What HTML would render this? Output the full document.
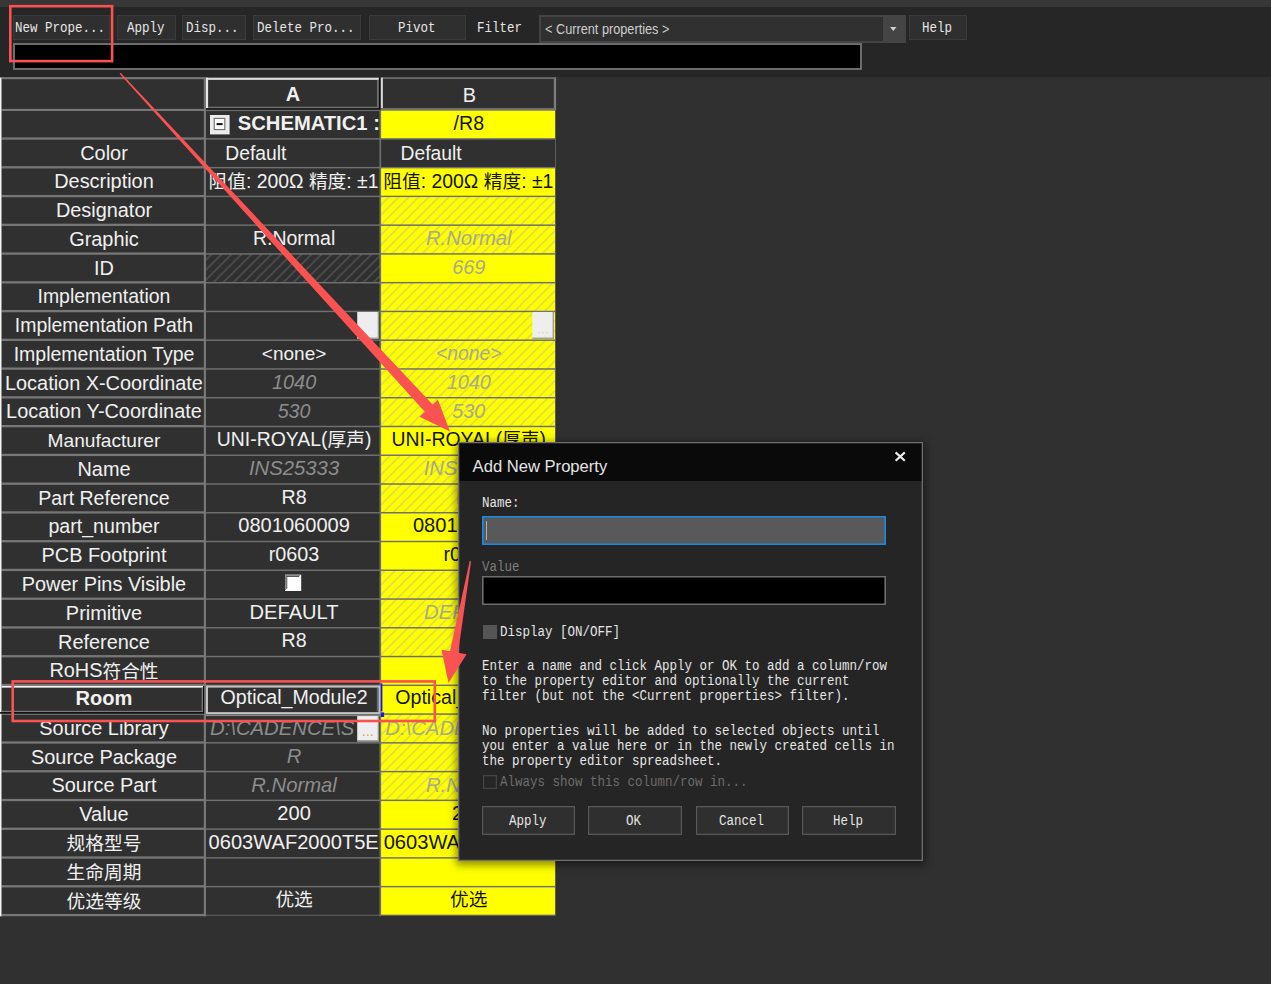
<!DOCTYPE html>
<html><head><meta charset="utf-8"><title>Property Editor</title><style>html,body{margin:0;padding:0}
body{width:1271px;height:984px;background:#303030;overflow:hidden;position:relative;font-family:"Liberation Sans",sans-serif}
.abs{position:absolute;left:0;top:0}
.m{position:absolute;font:14.0px/16px "Liberation Mono",monospace;white-space:pre;transform:scaleX(0.8927);transform-origin:0 0}
</style></head><body>
<div class="abs" style="left:0.00px;top:0.00px;width:1271.00px;height:7.00px;background:#373737;"></div><div class="abs" style="left:0.00px;top:7.00px;width:1271.00px;height:69.60px;background:#262626;"></div><div class="abs" style="left:13.00px;top:15.20px;width:97.00px;height:25.10px;background:#2f2f2f;box-shadow:inset 0 0 0 1px #3b3b3b;"></div><div class="m" style="left:14.70px;top:20.20px;color:#e6e6e6">New Prope...</div><div class="abs" style="left:117.30px;top:15.20px;width:58.40px;height:25.10px;background:#2f2f2f;box-shadow:inset 0 0 0 1px #3b3b3b;"></div><div class="m" style="left:127.15px;top:20.20px;color:#e6e6e6">Apply</div><div class="abs" style="left:182.30px;top:15.20px;width:63.40px;height:25.10px;background:#2f2f2f;box-shadow:inset 0 0 0 1px #3b3b3b;"></div><div class="m" style="left:185.95px;top:20.20px;color:#e6e6e6">Disp...</div><div class="abs" style="left:253.30px;top:15.20px;width:108.20px;height:25.10px;background:#2f2f2f;box-shadow:inset 0 0 0 1px #3b3b3b;"></div><div class="m" style="left:256.85px;top:20.20px;color:#e6e6e6">Delete Pro...</div><div class="abs" style="left:369.00px;top:15.20px;width:96.80px;height:25.10px;background:#2f2f2f;box-shadow:inset 0 0 0 1px #3b3b3b;"></div><div class="m" style="left:398.05px;top:20.20px;color:#e6e6e6">Pivot</div><div class="m" style="left:477.00px;top:19.80px;color:#e6e6e6">Filter</div><div class="abs" style="left:539.00px;top:15.10px;width:367.00px;height:28.00px;background:#303030;box-shadow:inset 0 0 0 2px #444444;"></div><div class="abs" style="left:882.70px;top:15.10px;width:23.30px;height:28.00px;background:#444444;"></div><div class="abs" style="left:544.6px;top:20.1px;font:15px/18px 'Liberation Sans',sans-serif;color:#cdcdcd;transform:scaleX(.848);transform-origin:0 0;white-space:pre">&lt; Current properties &gt;</div><svg class="abs" style="left:888px;top:25px" width="12" height="8"><path d="M2.0,1.9 L8.5,1.9 L5.25,6.1 Z" fill="#cfcfcf"/></svg><div class="abs" style="left:909.40px;top:15.20px;width:57.20px;height:25.10px;background:#2f2f2f;box-shadow:inset 0 0 0 1px #3b3b3b;"></div><div class="m" style="left:922.00px;top:20.20px;color:#e6e6e6">Help</div><div class="abs" style="left:12.60px;top:43.40px;width:849.20px;height:26.60px;background:#000;box-shadow:inset 0 0 0 2px #6c6c6c;"></div>
<svg class="abs" width="1271" height="984" viewBox="0 0 1271 984" font-family="Liberation Sans, sans-serif"><defs><pattern id="hy" width="10" height="10" patternUnits="userSpaceOnUse" x="5.6" y="0.2"><path d="M-1,11 L11,-1 M-1,1 L1,-1 M9,11 L11,9" stroke="#a8a8b0" stroke-width="1.05" stroke-opacity="0.62" fill="none"/></pattern><pattern id="hd" width="10" height="10" patternUnits="userSpaceOnUse" x="5.6" y="0.2"><path d="M-1,11 L11,-1 M-1,1 L1,-1 M9,11 L11,9" stroke="#5e5e5e" stroke-width="1.15" fill="none"/></pattern><clipPath id="ca"><rect x="206.2" y="78.0" width="173.20000000000005" height="840"/></clipPath><clipPath id="cb"><rect x="381.3" y="78.0" width="172.7" height="840"/></clipPath><clipPath id="csl"><rect x="206.2" y="78.0" width="150.8" height="840"/></clipPath></defs>
<rect x="380.90" y="109.10" width="174.20" height="29.90" fill="#ffff00"/>
<rect x="380.90" y="167.76" width="174.20" height="28.76" fill="#ffff00"/>
<rect x="380.90" y="196.52" width="174.20" height="28.76" fill="#ffff00"/>
<rect x="380.90" y="196.52" width="174.20" height="28.76" fill="url(#hy)"/>
<rect x="380.90" y="225.28" width="174.20" height="28.76" fill="#ffff00"/>
<rect x="380.90" y="225.28" width="174.20" height="28.76" fill="url(#hy)"/>
<rect x="380.90" y="254.04" width="174.20" height="28.76" fill="#ffff00"/>
<rect x="205.90" y="254.04" width="174.40" height="28.76" fill="url(#hd)"/>
<rect x="380.90" y="282.80" width="174.20" height="28.76" fill="#ffff00"/>
<rect x="380.90" y="282.80" width="174.20" height="28.76" fill="url(#hy)"/>
<rect x="380.90" y="311.56" width="174.20" height="28.76" fill="#ffff00"/>
<rect x="380.90" y="311.56" width="174.20" height="28.76" fill="url(#hy)"/>
<rect x="380.90" y="340.32" width="174.20" height="28.76" fill="#ffff00"/>
<rect x="380.90" y="340.32" width="174.20" height="28.76" fill="url(#hy)"/>
<rect x="380.90" y="369.08" width="174.20" height="28.76" fill="#ffff00"/>
<rect x="380.90" y="369.08" width="174.20" height="28.76" fill="url(#hy)"/>
<rect x="380.90" y="397.84" width="174.20" height="28.76" fill="#ffff00"/>
<rect x="380.90" y="397.84" width="174.20" height="28.76" fill="url(#hy)"/>
<rect x="380.90" y="426.60" width="174.20" height="28.76" fill="#ffff00"/>
<rect x="380.90" y="455.36" width="174.20" height="28.76" fill="#ffff00"/>
<rect x="380.90" y="455.36" width="174.20" height="28.76" fill="url(#hy)"/>
<rect x="380.90" y="484.12" width="174.20" height="28.76" fill="#ffff00"/>
<rect x="380.90" y="484.12" width="174.20" height="28.76" fill="url(#hy)"/>
<rect x="380.90" y="512.88" width="174.20" height="28.76" fill="#ffff00"/>
<rect x="380.90" y="541.64" width="174.20" height="28.76" fill="#ffff00"/>
<rect x="380.90" y="570.40" width="174.20" height="28.76" fill="#ffff00"/>
<rect x="380.90" y="570.40" width="174.20" height="28.76" fill="url(#hy)"/>
<rect x="380.90" y="599.16" width="174.20" height="28.76" fill="#ffff00"/>
<rect x="380.90" y="599.16" width="174.20" height="28.76" fill="url(#hy)"/>
<rect x="380.90" y="627.92" width="174.20" height="28.76" fill="#ffff00"/>
<rect x="380.90" y="627.92" width="174.20" height="28.76" fill="url(#hy)"/>
<rect x="380.90" y="656.68" width="174.20" height="28.76" fill="#ffff00"/>
<rect x="380.90" y="685.44" width="174.20" height="28.76" fill="#ffff00"/>
<rect x="380.90" y="714.20" width="174.20" height="28.76" fill="#ffff00"/>
<rect x="380.90" y="714.20" width="174.20" height="28.76" fill="url(#hy)"/>
<rect x="380.90" y="742.96" width="174.20" height="28.76" fill="#ffff00"/>
<rect x="380.90" y="742.96" width="174.20" height="28.76" fill="url(#hy)"/>
<rect x="380.90" y="771.72" width="174.20" height="28.76" fill="#ffff00"/>
<rect x="380.90" y="771.72" width="174.20" height="28.76" fill="url(#hy)"/>
<rect x="380.90" y="800.48" width="174.20" height="28.76" fill="#ffff00"/>
<rect x="380.90" y="829.24" width="174.20" height="28.76" fill="#ffff00"/>
<rect x="380.90" y="858.00" width="174.20" height="28.76" fill="#ffff00"/>
<rect x="380.90" y="886.76" width="174.20" height="28.76" fill="#ffff00"/>
<rect x="1.5" y="77.10" width="203.40" height="2.1" fill="#777777"/>
<rect x="1.5" y="108.90" width="203.40" height="2.1" fill="#777777"/>
<rect x="1.5" y="137.40" width="203.40" height="2.3" fill="#777777"/>
<rect x="1.5" y="166.16" width="203.40" height="2.3" fill="#777777"/>
<rect x="1.5" y="194.92" width="203.40" height="2.3" fill="#777777"/>
<rect x="1.5" y="223.68" width="203.40" height="2.3" fill="#777777"/>
<rect x="1.5" y="252.44" width="203.40" height="2.3" fill="#777777"/>
<rect x="1.5" y="281.20" width="203.40" height="2.3" fill="#777777"/>
<rect x="1.5" y="309.96" width="203.40" height="2.3" fill="#777777"/>
<rect x="1.5" y="338.72" width="203.40" height="2.3" fill="#777777"/>
<rect x="1.5" y="367.48" width="203.40" height="2.3" fill="#777777"/>
<rect x="1.5" y="396.24" width="203.40" height="2.3" fill="#777777"/>
<rect x="1.5" y="425.00" width="203.40" height="2.3" fill="#777777"/>
<rect x="1.5" y="453.76" width="203.40" height="2.3" fill="#777777"/>
<rect x="1.5" y="482.52" width="203.40" height="2.3" fill="#777777"/>
<rect x="1.5" y="511.28" width="203.40" height="2.3" fill="#777777"/>
<rect x="1.5" y="540.04" width="203.40" height="2.3" fill="#777777"/>
<rect x="1.5" y="568.80" width="203.40" height="2.3" fill="#777777"/>
<rect x="1.5" y="597.56" width="203.40" height="2.3" fill="#777777"/>
<rect x="1.5" y="626.32" width="203.40" height="2.3" fill="#777777"/>
<rect x="1.5" y="655.08" width="203.40" height="2.3" fill="#777777"/>
<rect x="1.5" y="683.84" width="203.40" height="2.3" fill="#777777"/>
<rect x="1.5" y="712.60" width="203.40" height="2.3" fill="#777777"/>
<rect x="1.5" y="741.36" width="203.40" height="2.3" fill="#777777"/>
<rect x="1.5" y="770.12" width="203.40" height="2.3" fill="#777777"/>
<rect x="1.5" y="798.88" width="203.40" height="2.3" fill="#777777"/>
<rect x="1.5" y="827.64" width="203.40" height="2.3" fill="#777777"/>
<rect x="1.5" y="856.40" width="203.40" height="2.3" fill="#777777"/>
<rect x="1.5" y="885.16" width="203.40" height="2.3" fill="#777777"/>
<rect x="1.5" y="913.92" width="203.40" height="2.3" fill="#777777"/>
<rect x="204.90" y="138.15" width="351.00" height="1.45" fill="#707070"/>
<rect x="204.90" y="166.91" width="351.00" height="1.45" fill="#707070"/>
<rect x="204.90" y="195.67" width="351.00" height="1.45" fill="#707070"/>
<rect x="204.90" y="224.43" width="351.00" height="1.45" fill="#707070"/>
<rect x="204.90" y="253.19" width="351.00" height="1.45" fill="#707070"/>
<rect x="204.90" y="281.95" width="351.00" height="1.45" fill="#707070"/>
<rect x="204.90" y="310.71" width="351.00" height="1.45" fill="#707070"/>
<rect x="204.90" y="339.47" width="351.00" height="1.45" fill="#707070"/>
<rect x="204.90" y="368.23" width="351.00" height="1.45" fill="#707070"/>
<rect x="204.90" y="396.99" width="351.00" height="1.45" fill="#707070"/>
<rect x="204.90" y="425.75" width="351.00" height="1.45" fill="#707070"/>
<rect x="204.90" y="454.51" width="351.00" height="1.45" fill="#707070"/>
<rect x="204.90" y="483.27" width="351.00" height="1.45" fill="#707070"/>
<rect x="204.90" y="512.03" width="351.00" height="1.45" fill="#707070"/>
<rect x="204.90" y="540.79" width="351.00" height="1.45" fill="#707070"/>
<rect x="204.90" y="569.55" width="351.00" height="1.45" fill="#707070"/>
<rect x="204.90" y="598.31" width="351.00" height="1.45" fill="#707070"/>
<rect x="204.90" y="627.07" width="351.00" height="1.45" fill="#707070"/>
<rect x="204.90" y="655.83" width="351.00" height="1.45" fill="#707070"/>
<rect x="204.90" y="684.59" width="351.00" height="1.45" fill="#707070"/>
<rect x="204.90" y="713.35" width="351.00" height="1.45" fill="#707070"/>
<rect x="204.90" y="742.11" width="351.00" height="1.45" fill="#707070"/>
<rect x="204.90" y="770.87" width="351.00" height="1.45" fill="#707070"/>
<rect x="204.90" y="799.63" width="351.00" height="1.45" fill="#707070"/>
<rect x="204.90" y="828.39" width="351.00" height="1.45" fill="#707070"/>
<rect x="204.90" y="857.15" width="351.00" height="1.45" fill="#707070"/>
<rect x="204.90" y="885.91" width="351.00" height="1.45" fill="#707070"/>
<rect x="204.90" y="914.67" width="351.00" height="1.2" fill="#5c5c5c"/>
<rect x="203.80" y="77.10" width="2.2" height="839.22" fill="#777777"/>
<rect x="379.50" y="110.10" width="1.6" height="806.22" fill="#707070"/>
<rect x="553.80" y="77.10" width="2.3" height="33.30" fill="#7c7c7c"/>
<rect x="555.05" y="110.4" width="0.95" height="805.52" fill="#5e5e5e"/>
<rect x="0" y="77.50" width="1.5" height="838.82" fill="#f4f4f4"/>
<rect x="206" y="77.70" width="172.90" height="2.2" fill="#d8d8d8"/>
<rect x="206" y="77.70" width="2.1" height="30.50" fill="#e6e6e6"/>
<rect x="377.0" y="80" width="1.9" height="28" fill="#707070"/>
<rect x="208" y="106.7" width="170.9" height="1.6" fill="#707070"/>
<rect x="378.9" y="77.70" width="1.5" height="31.8" fill="#0c0c0c"/>
<rect x="206" y="108.3" width="174.4" height="1.5" fill="#141414"/>
<rect x="206" y="109.8" width="174.4" height="1.3" fill="#6a6a6a"/>
<rect x="380.8" y="77.20" width="174.20" height="1.8" fill="#6a6a6a"/>
<rect x="380.8" y="77.70" width="2.1" height="30.6" fill="#d6d6d6"/>
<rect x="380.8" y="108.1" width="174.20" height="2.6" fill="#747474"/>
<text x="285.71" y="100.60" font-size="19.9" fill="#f0f0f0" font-weight="bold" xml:space="preserve">A</text>
<text x="462.66" y="101.80" font-size="19.9" fill="#f0f0f0" xml:space="preserve">B</text>
<g clip-path="url(#cb)"><text x="453.55" y="129.90" font-size="19.6" fill="#141400" xml:space="preserve">/R8</text></g>
<text x="80.22" y="159.60" font-size="19.9" fill="#f0f0f0" xml:space="preserve">Color</text>
<g clip-path="url(#ca)"><text x="225.30" y="159.80" font-size="19.3" fill="#f0f0f0" xml:space="preserve">Default</text></g>
<g clip-path="url(#cb)"><text x="400.60" y="159.80" font-size="19.3" fill="#f0f0f0" xml:space="preserve">Default</text></g>
<text x="54.23" y="188.36" font-size="19.9" fill="#f0f0f0" xml:space="preserve">Description</text>
<g clip-path="url(#ca)"><text x="208.50" y="188.06" font-size="18.7" fill="#f0f0f0" font-family="'Liberation Sans','Noto Sans CJK SC',sans-serif">阻值</text><text x="245.90" y="187.76" font-size="19.4" fill="#f0f0f0" xml:space="preserve">: 200Ω </text><text x="308.93" y="188.06" font-size="18.7" fill="#f0f0f0" font-family="'Liberation Sans','Noto Sans CJK SC',sans-serif">精度</text><text x="346.33" y="187.76" font-size="19.4" fill="#f0f0f0" xml:space="preserve">: ±1</text></g>
<g clip-path="url(#cb)"><text x="383.30" y="188.06" font-size="18.7" fill="#141400" font-family="'Liberation Sans','Noto Sans CJK SC',sans-serif">阻值</text><text x="420.70" y="187.76" font-size="19.4" fill="#141400" xml:space="preserve">: 200Ω </text><text x="483.73" y="188.06" font-size="18.7" fill="#141400" font-family="'Liberation Sans','Noto Sans CJK SC',sans-serif">精度</text><text x="521.13" y="187.76" font-size="19.4" fill="#141400" xml:space="preserve">: ±1</text></g>
<text x="55.89" y="217.12" font-size="19.9" fill="#f0f0f0" xml:space="preserve">Designator</text>
<text x="69.16" y="245.88" font-size="19.9" fill="#f0f0f0" xml:space="preserve">Graphic</text>
<g clip-path="url(#ca)"><text x="252.93" y="244.68" font-size="19.5" fill="#f0f0f0" xml:space="preserve">R.Normal</text></g>
<g clip-path="url(#cb)"><text x="425.94" y="245.38" font-size="20.3" fill="#a9a98e" font-style="italic" xml:space="preserve">R.Normal</text></g>
<text x="94.05" y="274.64" font-size="19.9" fill="#f0f0f0" xml:space="preserve">ID</text>
<g clip-path="url(#cb)"><text x="452.20" y="274.14" font-size="19.9" fill="#a9a98e" font-style="italic" xml:space="preserve">669</text></g>
<text x="37.52" y="303.40" font-size="19.45" fill="#f0f0f0" xml:space="preserve">Implementation</text>
<text x="14.81" y="332.16" font-size="19.45" fill="#f0f0f0" xml:space="preserve">Implementation Path</text>
<text x="13.68" y="360.92" font-size="19.5" fill="#f0f0f0" xml:space="preserve">Implementation Type</text>
<g clip-path="url(#ca)"><text x="261.87" y="359.72" font-size="19.0" fill="#f0f0f0" xml:space="preserve">&lt;none&gt;</text></g>
<g clip-path="url(#cb)"><text x="436.06" y="360.42" font-size="19.3" fill="#a9a98e" font-style="italic" xml:space="preserve">&lt;none&gt;</text></g>
<text x="5.00" y="389.68" font-size="19.9" fill="#f0f0f0" xml:space="preserve">Location X-Coordinate</text>
<g clip-path="url(#ca)"><text x="271.97" y="389.18" font-size="19.9" fill="#8c8c8c" font-style="italic" xml:space="preserve">1040</text></g>
<g clip-path="url(#cb)"><text x="446.67" y="389.18" font-size="19.9" fill="#a9a98e" font-style="italic" xml:space="preserve">1040</text></g>
<text x="6.09" y="418.44" font-size="19.9" fill="#f0f0f0" xml:space="preserve">Location Y-Coordinate</text>
<g clip-path="url(#ca)"><text x="277.67" y="417.94" font-size="19.7" fill="#8c8c8c" font-style="italic" xml:space="preserve">530</text></g>
<g clip-path="url(#cb)"><text x="452.37" y="417.94" font-size="19.7" fill="#a9a98e" font-style="italic" xml:space="preserve">530</text></g>
<text x="47.59" y="447.20" font-size="19.15" fill="#f0f0f0" xml:space="preserve">Manufacturer</text>
<g clip-path="url(#ca)"><text x="216.84" y="446.00" font-size="19.4" fill="#f0f0f0" xml:space="preserve">UNI-ROYAL(</text><text x="327.50" y="446.30" font-size="18.7" fill="#f0f0f0" font-family="'Liberation Sans','Noto Sans CJK SC',sans-serif">厚声</text><text x="364.90" y="446.00" font-size="19.4" fill="#f0f0f0" xml:space="preserve">)</text></g>
<g clip-path="url(#cb)"><text x="391.54" y="446.00" font-size="19.4" fill="#141400" xml:space="preserve">UNI-ROYAL(</text><text x="502.20" y="446.30" font-size="18.7" fill="#141400" font-family="'Liberation Sans','Noto Sans CJK SC',sans-serif">厚声</text><text x="539.60" y="446.00" font-size="19.4" fill="#141400" xml:space="preserve">)</text></g>
<text x="77.46" y="475.96" font-size="19.9" fill="#f0f0f0" xml:space="preserve">Name</text>
<g clip-path="url(#ca)"><text x="248.96" y="475.46" font-size="20.3" fill="#8c8c8c" font-style="italic" xml:space="preserve">INS25333</text></g>
<g clip-path="url(#cb)"><text x="423.66" y="475.46" font-size="20.3" fill="#a9a98e" font-style="italic" xml:space="preserve">INS25333</text></g>
<text x="38.26" y="504.72" font-size="19.55" fill="#f0f0f0" xml:space="preserve">Part Reference</text>
<g clip-path="url(#ca)"><text x="281.57" y="503.52" font-size="19.6" fill="#f0f0f0" xml:space="preserve">R8</text></g>
<g clip-path="url(#cb)"><text x="456.27" y="503.52" font-size="19.6" fill="#141400" xml:space="preserve">R8</text></g>
<text x="48.44" y="533.48" font-size="19.6" fill="#f0f0f0" xml:space="preserve">part_number</text>
<g clip-path="url(#ca)"><text x="238.21" y="532.28" font-size="20.1" fill="#f0f0f0" xml:space="preserve">0801060009</text></g>
<g clip-path="url(#cb)"><text x="412.91" y="532.28" font-size="20.1" fill="#141400" xml:space="preserve">0801060009</text></g>
<text x="41.51" y="562.24" font-size="19.9" fill="#f0f0f0" xml:space="preserve">PCB Footprint</text>
<g clip-path="url(#ca)"><text x="268.78" y="561.04" font-size="19.8" fill="#f0f0f0" xml:space="preserve">r0603</text></g>
<g clip-path="url(#cb)"><text x="443.48" y="561.04" font-size="19.8" fill="#141400" xml:space="preserve">r0603</text></g>
<text x="21.78" y="591.00" font-size="19.9" fill="#f0f0f0" xml:space="preserve">Power Pins Visible</text>
<text x="65.86" y="619.76" font-size="19.9" fill="#f0f0f0" xml:space="preserve">Primitive</text>
<g clip-path="url(#ca)"><text x="249.61" y="618.56" font-size="20.1" fill="#f0f0f0" xml:space="preserve">DEFAULT</text></g>
<g clip-path="url(#cb)"><text x="424.06" y="619.26" font-size="20.3" fill="#a9a98e" font-style="italic" xml:space="preserve">DEFAULT</text></g>
<text x="58.10" y="648.52" font-size="19.9" fill="#f0f0f0" xml:space="preserve">Reference</text>
<g clip-path="url(#ca)"><text x="281.57" y="647.32" font-size="19.6" fill="#f0f0f0" xml:space="preserve">R8</text></g>
<g clip-path="url(#cb)"><text x="455.83" y="648.02" font-size="20.3" fill="#a9a98e" font-style="italic" xml:space="preserve">R8</text></g>
<text x="49.41" y="677.28" font-size="19.9" fill="#f0f0f0" xml:space="preserve">RoHS</text><text x="102.49" y="677.58" font-size="18.7" fill="#f0f0f0" font-family="'Liberation Sans','Noto Sans CJK SC',sans-serif">符合性</text>
<text x="75.53" y="704.84" font-size="20.1" fill="#f0f0f0" font-weight="bold" xml:space="preserve">Room</text>
<g clip-path="url(#ca)"><text x="220.56" y="703.64" font-size="19.6" fill="#f0f0f0" xml:space="preserve">Optical_Module2</text></g>
<g clip-path="url(#cb)"><text x="395.26" y="703.64" font-size="19.6" fill="#141400" xml:space="preserve">Optical_Module2</text></g>
<text x="39.30" y="734.80" font-size="19.9" fill="#f0f0f0" xml:space="preserve">Source Library</text>
<g clip-path="url(#csl)"><text x="210.00" y="734.60" font-size="20.3" fill="#8c8c8c" font-style="italic" xml:space="preserve">D:\CADENCE\S</text></g>
<g clip-path="url(#cb)"><text x="385.30" y="734.60" font-size="20.3" fill="#a9a98e" font-style="italic" xml:space="preserve">D:\CADENCE\SPB_17</text></g>
<text x="30.99" y="763.56" font-size="19.9" fill="#f0f0f0" xml:space="preserve">Source Package</text>
<g clip-path="url(#ca)"><text x="286.77" y="763.06" font-size="20.3" fill="#8c8c8c" font-style="italic" xml:space="preserve">R</text></g>
<g clip-path="url(#cb)"><text x="461.47" y="763.06" font-size="20.3" fill="#a9a98e" font-style="italic" xml:space="preserve">R</text></g>
<text x="51.46" y="792.32" font-size="19.9" fill="#f0f0f0" xml:space="preserve">Source Part</text>
<g clip-path="url(#ca)"><text x="251.24" y="791.82" font-size="20.3" fill="#8c8c8c" font-style="italic" xml:space="preserve">R.Normal</text></g>
<g clip-path="url(#cb)"><text x="425.94" y="791.82" font-size="20.3" fill="#a9a98e" font-style="italic" xml:space="preserve">R.Normal</text></g>
<text x="79.29" y="821.08" font-size="19.9" fill="#f0f0f0" xml:space="preserve">Value</text>
<g clip-path="url(#ca)"><text x="277.33" y="819.88" font-size="20.1" fill="#f0f0f0" xml:space="preserve">200</text></g>
<g clip-path="url(#cb)"><text x="452.03" y="819.88" font-size="20.1" fill="#141400" xml:space="preserve">200</text></g>
<text x="66.60" y="850.14" font-size="18.7" fill="#f0f0f0" font-family="'Liberation Sans','Noto Sans CJK SC',sans-serif">规格型号</text>
<g clip-path="url(#ca)"><text x="208.60" y="849.44" font-size="20.1" fill="#f0f0f0" xml:space="preserve">0603WAF2000T5E</text></g>
<g clip-path="url(#cb)"><text x="383.70" y="849.44" font-size="20.1" fill="#141400" xml:space="preserve">0603WAF2000T5E</text></g>
<text x="66.60" y="878.90" font-size="18.7" fill="#f0f0f0" font-family="'Liberation Sans','Noto Sans CJK SC',sans-serif">生命周期</text>
<text x="66.60" y="907.66" font-size="18.7" fill="#f0f0f0" font-family="'Liberation Sans','Noto Sans CJK SC',sans-serif">优选等级</text>
<g clip-path="url(#ca)"><text x="275.40" y="906.46" font-size="18.7" fill="#f0f0f0" font-family="'Liberation Sans','Noto Sans CJK SC',sans-serif">优选</text></g>
<g clip-path="url(#cb)"><text x="450.10" y="906.46" font-size="18.7" fill="#141400" font-family="'Liberation Sans','Noto Sans CJK SC',sans-serif">优选</text></g>
<rect x="210" y="115.0" width="19.6" height="19.4" fill="#ececec"/>
<rect x="214.2" y="118.4" width="10.6" height="11.2" fill="#fafafa" stroke="#6e6e6e" stroke-width="1.1"/>
<rect x="216.6" y="123.1" width="6" height="2" fill="#111"/>
<g clip-path="url(#ca)"><text x="237.80" y="130.10" font-size="20.2" fill="#f0f0f0" font-weight="bold" xml:space="preserve">SCHEMATIC1 : </text></g>
<rect x="357.2" y="311.96" width="21.80000000000001" height="26.900000000000034" fill="#eeeeee"/>
<rect x="357.2" y="337.56" width="21.80000000000001" height="1.3" fill="#9a9a9a"/>
<rect x="377.7" y="311.96" width="1.3" height="26.900000000000034" fill="#9a9a9a"/>
<rect x="362.9" y="331.86" width="1.6" height="1.5" fill="#f8f8f8"/>
<rect x="366.9" y="331.86" width="1.6" height="1.5" fill="#f8f8f8"/>
<rect x="370.9" y="331.86" width="1.6" height="1.5" fill="#f8f8f8"/>
<rect x="532.3" y="311.96" width="21.600000000000023" height="26.900000000000034" fill="#eeeeee"/>
<rect x="532.3" y="337.56" width="21.600000000000023" height="1.3" fill="#9a9a9a"/>
<rect x="552.6" y="311.96" width="1.3" height="26.900000000000034" fill="#9a9a9a"/>
<rect x="538.0" y="331.86" width="1.6" height="1.5" fill="#e8d8c0"/>
<rect x="542.0" y="331.86" width="1.6" height="1.5" fill="#e8d8c0"/>
<rect x="546.0" y="331.86" width="1.6" height="1.5" fill="#e8d8c0"/>
<rect x="357.2" y="716.0" width="21.80000000000001" height="25.40000000000009" fill="#eeeeee"/>
<rect x="357.2" y="740.1000000000001" width="21.80000000000001" height="1.3" fill="#9a9a9a"/>
<rect x="377.7" y="716.0" width="1.3" height="25.40000000000009" fill="#9a9a9a"/>
<rect x="362.9" y="734.4000000000001" width="1.6" height="1.5" fill="#e0a060"/>
<rect x="366.9" y="734.4000000000001" width="1.6" height="1.5" fill="#e0a060"/>
<rect x="370.9" y="734.4000000000001" width="1.6" height="1.5" fill="#e0a060"/>
<rect x="285" y="574.70" width="16.2" height="16.3" fill="#ffffff"/>
<rect x="285" y="574.70" width="15.2" height="1.2" fill="#8a8a8a"/><rect x="285" y="574.70" width="1.2" height="15.3" fill="#8a8a8a"/>
<rect x="286.2" y="575.90" width="13" height="1.1" fill="#5a5a5a"/><rect x="286.2" y="575.90" width="1.1" height="13" fill="#5a5a5a"/>
<rect x="1.5" y="685.94" width="202.30" height="1.7" fill="#f4f4f4"/>
<rect x="1.5" y="710.80" width="202.30" height="1.3" fill="#7a7a7a"/>
<rect x="0" y="712.10" width="203.80" height="1.6" fill="#0c0c0c"/>
<rect x="201.70" y="687.64" width="1.3" height="23.76" fill="#7a7a7a"/>
<rect x="203.00" y="685.94" width="1.2" height="27.76" fill="#0c0c0c"/>
<rect x="207.0" y="686.6" width="172.40" height="26.50" fill="none" stroke="#c2c2c2" stroke-width="2"/>
<rect x="376.8" y="688" width="1.4" height="23.5" fill="#6a6a6a"/>
<rect x="204.90" y="714.9" width="175.40" height="1.2" fill="#888"/>
<rect x="380.9" y="683.44" width="1.5" height="27.96" fill="#1a1aee"/>
<rect x="380.9" y="712.40" width="3.2" height="4.6" fill="#1a1aee"/></svg>
<svg class="abs" width="1271" height="984" viewBox="0 0 1271 984"><rect x="10.3" y="6.2" width="101.8" height="54.9" fill="none" stroke="#fa5252" stroke-width="2.6"/><rect x="12.7" y="681.4" width="422.1" height="39.6" fill="none" stroke="#fa5252" stroke-width="2.6"/></svg>
<div class="abs" style="left:458.3px;top:442.3px;width:464.99999999999994px;height:418.3px;background:#252525;box-shadow:0 2px 8px 2px rgba(0,0,0,.45)"></div><div class="abs" style="left:458.30px;top:442.30px;width:465.00px;height:38.30px;background:#0a0a0a;"></div><div class="abs" style="left:458.3px;top:442.3px;width:464.99999999999994px;height:418.3px;box-shadow:inset 0 0 0 1.3px #6f6f6f"></div><div class="abs" style="left:472.6px;top:456.6px;font:16.6px/20px 'Liberation Sans',sans-serif;color:#e4e4e4;white-space:pre">Add New Property</div><svg class="abs" style="left:893px;top:450px" width="14" height="14"><path d="M2.6,2.4 L11.8,10.8 M11.8,2.4 L2.6,10.8" stroke="#ececec" stroke-width="2.1" fill="none"/></svg><div class="m" style="left:481.60px;top:495.20px;color:#e6e6e6">Name:</div><div class="abs" style="left:481.60px;top:515.80px;width:404.60px;height:28.80px;background:#595959;box-shadow:inset 0 0 0 1.6px #1a8ae8;"></div><div class="abs" style="left:486.00px;top:520.50px;width:1.00px;height:19.00px;background:#b0b0b0;"></div><div class="m" style="left:481.60px;top:558.60px;color:#7e7e7e">Value</div><div class="abs" style="left:481.60px;top:575.70px;width:404.60px;height:28.90px;background:#000;box-shadow:inset 0 0 0 1.6px #6e6e6e;"></div><div class="abs" style="left:483.20px;top:624.70px;width:13.80px;height:13.90px;background:#555555;"></div><div class="m" style="left:500.00px;top:623.80px;color:#e6e6e6">Display [ON/OFF]</div><div class="m" style="left:481.60px;top:658.00px;color:#e6e6e6">Enter a name and click Apply or OK to add a column/row</div><div class="m" style="left:481.60px;top:673.00px;color:#e6e6e6">to the property editor and optionally the current</div><div class="m" style="left:481.60px;top:688.00px;color:#e6e6e6">filter (but not the &lt;Current properties&gt; filter).</div><div class="m" style="left:481.60px;top:722.80px;color:#e6e6e6">No properties will be added to selected objects until</div><div class="m" style="left:481.60px;top:737.85px;color:#e6e6e6">you enter a value here or in the newly created cells in</div><div class="m" style="left:481.60px;top:752.90px;color:#e6e6e6">the property editor spreadsheet.</div><div class="abs" style="left:483.20px;top:775.00px;width:13.80px;height:13.60px;background:#262626;box-shadow:inset 0 0 0 1.2px #444;"></div><div class="m" style="left:500.00px;top:774.20px;color:#6c6c6c">Always show this column/row in...</div><div class="abs" style="left:481.60px;top:806.20px;width:93.70px;height:28.60px;background:#2f2f2f;box-shadow:inset 0 0 0 1.2px #585858;"></div><div class="m" style="left:508.70px;top:813.00px;color:#e6e6e6">Apply</div><div class="abs" style="left:588.00px;top:806.20px;width:93.70px;height:28.60px;background:#2f2f2f;box-shadow:inset 0 0 0 1.2px #585858;"></div><div class="m" style="left:626.35px;top:813.00px;color:#e6e6e6">OK</div><div class="abs" style="left:695.60px;top:806.20px;width:93.60px;height:28.60px;background:#2f2f2f;box-shadow:inset 0 0 0 1.2px #585858;"></div><div class="m" style="left:718.90px;top:813.00px;color:#e6e6e6">Cancel</div><div class="abs" style="left:801.60px;top:806.20px;width:94.00px;height:28.60px;background:#2f2f2f;box-shadow:inset 0 0 0 1.2px #585858;"></div><div class="m" style="left:832.60px;top:813.00px;color:#e6e6e6">Help</div>
<svg class="abs" width="1271" height="984" viewBox="0 0 1271 984"><polygon points="119.6,73.8 424.8,411.8 419.5,416.7 450.0,431.4 437.9,399.8 432.6,404.6 120.6,72.8" fill="#fa5252"/><polygon points="469.7,561.1 450.0,651.3 441.5,649.7 448.5,683.0 466.6,654.3 458.1,652.7 471.1,561.3" fill="#fa5252"/></svg>
</body></html>
